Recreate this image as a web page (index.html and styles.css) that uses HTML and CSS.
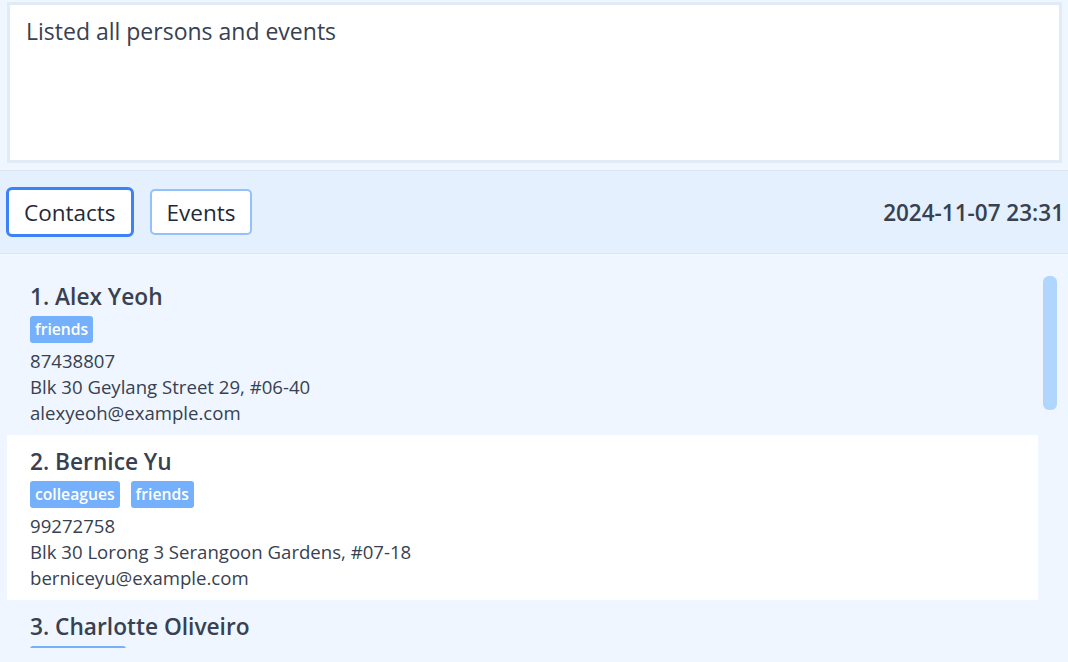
FILE: index.html
```html
<!DOCTYPE html>
<html>
<head>
<meta charset="utf-8">
<link rel="stylesheet" href="styles.css">
</head>
<body>
<div class="app">
  <div class="result-wrap">
    <div class="result">Listed all persons and events</div>
  </div>
  <div class="tabbar">
    <div class="tabs">
      <button class="tab active">Contacts</button>
      <button class="tab">Events</button>
    </div>
    <div class="clock">2024-11-07 23:31</div>
  </div>
  <div class="list-area">
    <div class="list">
      <div class="card">
        <div class="name">1. Alex Yeoh</div>
        <div class="tags"><span class="tag">friends</span></div>
        <div class="line">87438807</div>
        <div class="line">Blk 30 Geylang Street 29, #06-40</div>
        <div class="line">alexyeoh@example.com</div>
      </div>
      <div class="card alt">
        <div class="name">2. Bernice Yu</div>
        <div class="tags"><span class="tag">colleagues</span><span class="tag">friends</span></div>
        <div class="line">99272758</div>
        <div class="line">Blk 30 Lorong 3 Serangoon Gardens, #07-18</div>
        <div class="line">berniceyu@example.com</div>
      </div>
      <div class="card">
        <div class="name">3. Charlotte Oliveiro</div>
        <div class="tags"><span class="tag">neighbours</span></div>
      </div>
    </div>
    <div class="scrollbar"><div class="thumb"></div></div>
  </div>
</div>
</body>
</html>
```

FILE: styles.css
```css
* { box-sizing: border-box; }
html, body {
  margin: 0;
  padding: 0;
  width: 1068px;
  height: 662px;
  overflow: hidden;
  background: #eff6ff;
  font-family: "Open Sans", "Noto Sans", sans-serif;
  color: #374151;
}
.app {
  display: flex;
  flex-direction: column;
  height: 662px;
}
.result-wrap {
  padding: 2px 6px 0 7px;
  height: 171px;
  border-bottom: 1px solid #dce6f1;
}
.result {
  height: 161px;
  background: #ffffff;
  border: 3px solid #e1ebf6;
  padding: 11px 16px;
  font-size: 23px;
  line-height: 30px;
  color: #374151;
}
.tabbar {
  height: 83px;
  background: #e4f0fd;
  border-bottom: 1px solid #dbe6f2;
  display: flex;
  align-items: center;
  justify-content: space-between;
  padding: 0 4px 0 6px;
}
.tabs {
  display: flex;
  align-items: center;
  gap: 16px;
}
.tab {
  font-family: "Open Sans", "Noto Sans", sans-serif;
  font-size: 22.5px;
  color: #1f2937;
  background: #ffffff;
  border: 2px solid #93c2fb;
  border-radius: 5px;
  height: 46px;
  padding: 0 15px;
}
.tab.active {
  border: 3px solid #3b82f6;
  height: 50px;
  padding: 0 15px;
  border-radius: 6px;
}
.clock {
  font-size: 22.5px;
  font-weight: 600;
  color: #374151;
}
.list-area {
  height: 394px;
  display: flex;
  overflow: hidden;
  padding: 16px 0 0 7px;
}
.list {
  width: 1031px;
}
.card {
  padding: 11px 23px 9px 23px;
  height: 165px;
}
.card.alt {
  background: #ffffff;
}
.name {
  font-size: 22.7px;
  font-weight: 600;
  line-height: 31px;
  color: #374151;
}
.tags {
  display: flex;
  gap: 11px;
  margin: 4px 0 5px 0;
}
.tag {
  background: #74b0fb;
  color: #ffffff;
  font-size: 15.7px;
  font-weight: 600;
  height: 27px;
  line-height: 27px;
  padding: 0 5px;
  border-radius: 3px;
}
.line {
  font-size: 18.6px;
  line-height: 26px;
  color: #374151;
}
.scrollbar {
  width: 30px;
  padding: 6px 0 0 5px;
}
.thumb {
  width: 14px;
  height: 134px;
  background: #b1d6fd;
  border-radius: 6px;
}
```
